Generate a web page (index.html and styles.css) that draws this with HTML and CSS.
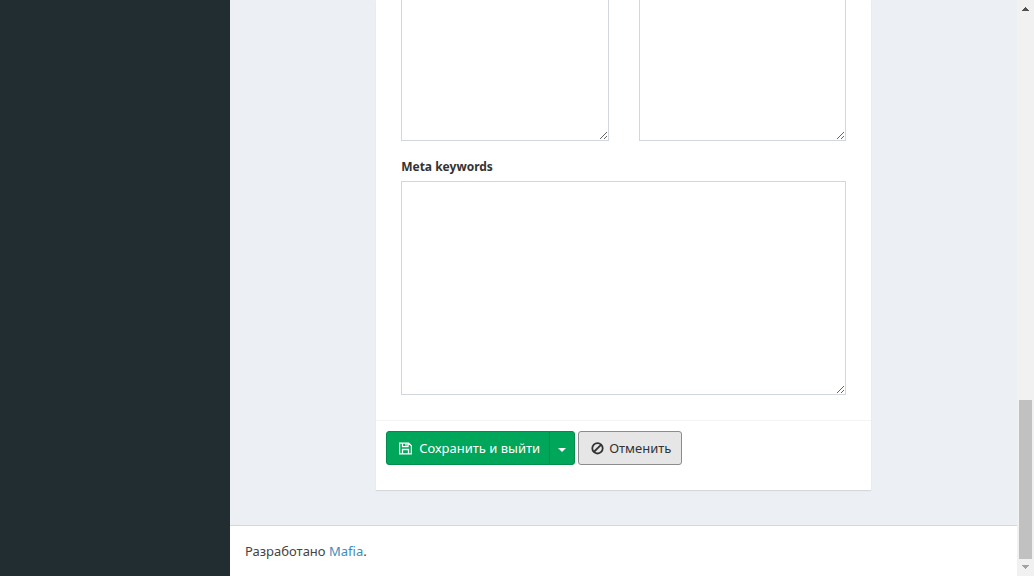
FILE: index.html
```html
<!DOCTYPE html>
<html lang="ru">
<head>
<meta charset="utf-8">
<title>Meta keywords</title>
<link rel="stylesheet" href="styles.css">
</head>
<body>
<div class="wrapper">
  <aside class="sidebar"></aside>
  <div class="page">
    <main class="content">
      <form class="box">
        <div class="box-body">
          <div class="columns">
            <textarea class="field field-continued" aria-label="Meta title"></textarea>
            <textarea class="field field-continued" aria-label="Meta description"></textarea>
          </div>
          <label class="label" for="keywords">Meta keywords</label>
          <textarea class="field" id="keywords"></textarea>
        </div>
        <div class="box-footer">
          <div class="btn-group">
            <button class="btn btn-success btn-main" type="button">
              <svg class="icon icon-save" viewBox="0 0 13 13" aria-hidden="true"><path d="M.6 1.100h9l2.800 2.800v8H.6z M3.500 1.100v3.500h5.500v-3.500 M3.500 11.900v-4.400h6v4.400"/><path d="M7 1.500v2.200"/></svg>
              <span>Сохранить и выйти</span>
            </button>
            <button class="btn btn-success btn-caret" type="button" aria-label="Ещё"><span class="caret"></span></button>
          </div>
          <button class="btn btn-default" type="button">
            <svg class="icon icon-ban" viewBox="0 0 13 13" aria-hidden="true"><circle cx="6.500" cy="6.300" r="5.200"/><path d="M2.800 10l7.400-7.400"/></svg>
            <span>Отменить</span>
          </button>
        </div>
      </form>
    </main>
    <footer class="footer">Разработано <a class="link" href="#">Mafia</a>.</footer>
  </div>
  <div class="scrollbar" aria-hidden="true">
    <svg class="arrow arrow-up" viewBox="0 0 7 4"><path d="M3 0h1v1h1v1h1v1h1v1H0V3h1V2h1V1h1z"/></svg>
    <div class="track"><div class="thumb"></div></div>
    <svg class="arrow arrow-down" viewBox="0 0 7 4"><path d="M0 0h7v1H6v1H5v1H4v1H3V3H2V2H1V1H0z"/></svg>
  </div>
</div>
</body>
</html>
```
FILE: styles.css
```css
* {
  box-sizing: border-box;
}

body {
  margin: 0;
  background: #ecf0f5;
  color: #333;
  font-family: "Noto Sans", "Open Sans", sans-serif;
  font-size: 13px;
  line-height: 20px;
}

.wrapper {
  display: grid;
  grid-template-columns: 230px minmax(0, 1fr) 17px;
  min-height: 100vh;
}

.sidebar {
  background: #222d32;
}

.page {
  display: flex;
  flex-direction: column;
}

.content {
  flex: 1;
  width: 66.6667%;
  margin: 0 auto;
  padding: 0 15px 35px;
}

.box {
  background: #fff;
  box-shadow: 0 1px 1px rgba(0, 0, 0, 0.1);
}

.box-body {
  padding: 0 25px 25px;
}

.columns {
  display: grid;
  grid-template-columns: 1fr 1fr;
  gap: 30px;
  margin-bottom: 16px;
}

.field {
  display: block;
  width: 100%;
  height: 214px;
  margin: 0;
  padding: 6px 12px;
  border: 1px solid #d2d6de;
  border-radius: 0;
  background: #fff;
  color: #555;
  font: inherit;
  outline: none;
}

.field-continued {
  height: 141px;
  border-top: 0;
}

.label {
  display: block;
  margin-bottom: 4px;
  font-size: 12px;
  font-weight: 700;
}

.box-footer {
  display: flex;
  gap: 3px;
  padding: 10px 10px 25px;
  border-top: 1px solid #f4f4f4;
}

.btn-group {
  display: flex;
}

.btn {
  display: flex;
  align-items: center;
  height: 34px;
  padding: 0 12px;
  border: 1px solid #8c8c8c;
  border-radius: 3px;
  font: inherit;
  white-space: nowrap;
  cursor: pointer;
}

.btn-success {
  border-color: #008d4c;
  background: #00a65a;
  color: #fff;
}

.btn-main {
  gap: 7px;
  padding-right: 9px;
  border-radius: 3px 0 0 3px;
}

.btn-caret {
  margin-left: -1px;
  padding: 0 8px;
  border-radius: 0 3px 3px 0;
}

.btn-default {
  gap: 5px;
  padding-right: 10px;
  background: #e6e6e6;
  color: #333;
}

.icon {
  width: 13px;
  height: 13px;
  fill: none;
  stroke: currentColor;
  stroke-width: 1.3;
}

.icon-ban {
  stroke-width: 1.8;
}

.caret {
  margin-top: 3px;
  border-top: 4px solid;
  border-right: 4px solid transparent;
  border-left: 4px solid transparent;
}

.footer {
  padding: 15px;
  border-top: 1px solid #d2d6de;
  background: #fff;
  color: #444;
}

.link {
  color: #3c8dbc;
  text-decoration: none;
}

.scrollbar {
  display: flex;
  flex-direction: column;
  align-items: center;
  padding: 7px 2px;
  background: #f1f1f1;
}

.arrow {
  width: 7px;
  height: 4px;
}

.arrow-up {
  fill: #505050;
}

.arrow-down {
  fill: #a3a3a3;
}

.track {
  display: flex;
  flex: 1;
  flex-direction: column;
  justify-content: flex-end;
  align-self: stretch;
  padding: 6px 0;
}

.thumb {
  height: 159px;
  background: #c1c1c1;
}
```
